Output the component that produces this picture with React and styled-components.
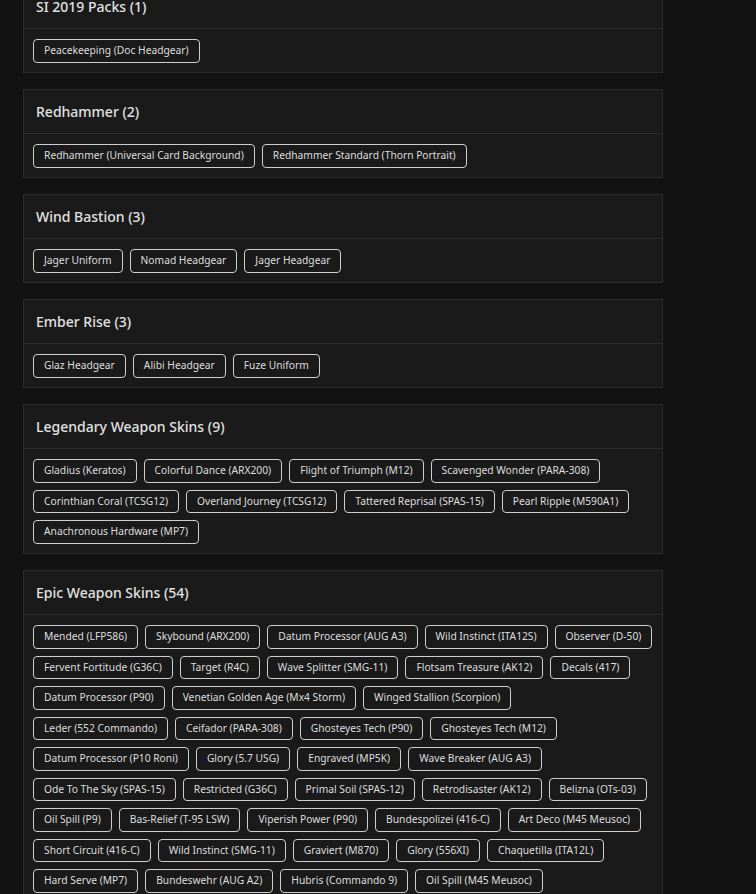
import React from "react";
import styled, { createGlobalStyle } from "styled-components";

const packs = [
  { title: "SI 2019 Packs", items: ["Peacekeeping (Doc Headgear)"] },
  {
    title: "Redhammer",
    items: [
      "Redhammer (Universal Card Background)",
      "Redhammer Standard (Thorn Portrait)",
    ],
  },
  {
    title: "Wind Bastion",
    items: ["Jager Uniform", "Nomad Headgear", "Jager Headgear"],
  },
  {
    title: "Ember Rise",
    items: ["Glaz Headgear", "Alibi Headgear", "Fuze Uniform"],
  },
  {
    title: "Legendary Weapon Skins",
    count: 9,
    items: [
      "Gladius (Keratos)",
      "Colorful Dance (ARX200)",
      "Flight of Triumph (M12)",
      "Scavenged Wonder (PARA-308)",
      "Corinthian Coral (TCSG12)",
      "Overland Journey (TCSG12)",
      "Tattered Reprisal (SPAS-15)",
      "Pearl Ripple (M590A1)",
      "Anachronous Hardware (MP7)",
    ],
  },
  {
    title: "Epic Weapon Skins",
    count: 54,
    items: [
      "Mended (LFP586)",
      "Skybound (ARX200)",
      "Datum Processor (AUG A3)",
      "Wild Instinct (ITA12S)",
      "Observer (D-50)",
      "Fervent Fortitude (G36C)",
      "Target (R4C)",
      "Wave Splitter (SMG-11)",
      "Flotsam Treasure (AK12)",
      "Decals (417)",
      "Datum Processor (P90)",
      "Venetian Golden Age (Mx4 Storm)",
      "Winged Stallion (Scorpion)",
      "Leder (552 Commando)",
      "Ceifador (PARA-308)",
      "Ghosteyes Tech (P90)",
      "Ghosteyes Tech (M12)",
      "Datum Processor (P10 Roni)",
      "Glory (5.7 USG)",
      "Engraved (MP5K)",
      "Wave Breaker (AUG A3)",
      "Ode To The Sky (SPAS-15)",
      "Restricted (G36C)",
      "Primal Soil (SPAS-12)",
      "Retrodisaster (AK12)",
      "Belizna (OTs-03)",
      "Oil Spill (P9)",
      "Bas-Relief (T-95 LSW)",
      "Viperish Power (P90)",
      "Bundespolizei (416-C)",
      "Art Deco (M45 Meusoc)",
      "Short Circuit (416-C)",
      "Wild Instinct (SMG-11)",
      "Graviert (M870)",
      "Glory (556XI)",
      "Chaquetilla (ITA12L)",
      "Hard Serve (MP7)",
      "Bundeswehr (AUG A2)",
      "Hubris (Commando 9)",
      "Oil Spill (M45 Meusoc)",
    ],
  },
];

export default function App() {
  return (
    <>
      <GlobalStyle />
      <Page>
        {packs.map((pack) => (
          <Card key={pack.title}>
            <CardHeader>
              {pack.title} ({pack.count ?? pack.items.length})
            </CardHeader>
            <CardBody>
              {pack.items.map((item, i) => (
                <Tag key={item + i}>{item}</Tag>
              ))}
            </CardBody>
          </Card>
        ))}
      </Page>
    </>
  );
}

const GlobalStyle = createGlobalStyle`
  html, body {
    margin: 0;
    background-color: #121212;
    font-family: "Noto Sans", "Open Sans", sans-serif;
    overflow: hidden;
  }
`;

// the list is scrolled a little, so the first card's top edge sits above the fold
const Page = styled.div`
  display: flex;
  flex-direction: column;
  gap: 16.5px;
  width: 640px;
  margin: -16px 0 0 23px;
`;

const Card = styled.section`
  background-color: #1a1a1a;
  border: 1px solid #2b2b2b;
`;

const CardHeader = styled.h2`
  margin: 0;
  height: 43px;
  display: flex;
  align-items: center;
  padding: 0 12px;
  border-bottom: 1px solid #2b2b2b;
  color: #e2e2e2;
  font-size: 14px;
  font-weight: 500;
`;

const CardBody = styled.div`
  display: flex;
  flex-wrap: wrap;
  gap: 7px;
  padding: 10px 9.15px 9px 9px;
`;

const Tag = styled.span`
  padding: 3px 10px;
  border: 1px solid #cfcfcf;
  border-radius: 4px;
  color: #dedede;
  font-size: 10.25px;
  line-height: 15.5px;
  white-space: nowrap;
`;
